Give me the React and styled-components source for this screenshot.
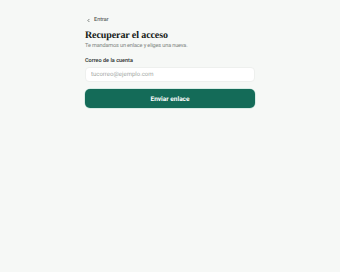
import React, { useState } from 'react';
import styled, { createGlobalStyle } from 'styled-components';

const Global = createGlobalStyle`
html, body {
  margin: 0;
  padding: 0;
  background: #f6f8f6;
}
body {
  font-family: Roboto, "Noto Sans", sans-serif;
  color: #1d2320;
  text-rendering: geometricPrecision;
}
`

const Page = styled.div`
min-height: 272px;
display: flex;
justify-content: center;
padding-top: 16px;
box-sizing: border-box;
`

const Column = styled.div`
width: 170px;
display: flex;
flex-direction: column;
`

const Back = styled.a`
display: flex;
align-items: center;
gap: 3px;
font-size: 5.5px;
color: #3a403d;
text-decoration: none;
height: 8px;
margin-left: 1px;
cursor: pointer;
`

const Title = styled.h1`
font-family: "Liberation Serif", "DejaVu Serif", serif;
font-weight: 700;
font-size: 10px;
letter-spacing: -0.1px;
margin: 6px 0 0;
line-height: 12px;
color: #151a17;
`

const Subtitle = styled.p`
font-size: 5.5px;
letter-spacing: -0.12px;
color: #7d8480;
margin: 1px 0 0;
line-height: 7px;
`

const Label = styled.label`
font-size: 5.5px;
font-weight: 500;
color: #2a302d;
margin-top: 8px;
line-height: 7px;
`

const Input = styled.input`
margin-top: 2px;
height: 15px;
box-sizing: border-box;
border: 1px solid #eef0ee;
border-radius: 4px;
background: #ffffff;
padding: 0 5px;
font-family: inherit;
font-size: 6px;
color: #222;
outline: none;
text-rendering: geometricPrecision;
&::placeholder {
  color: #a3a8a5;
}
`

const Button = styled.button`
margin-top: 7px;
height: 19px;
border: none;
border-radius: 5px;
background: #146b58;
color: #ffffff;
font-family: inherit;
font-weight: 700;
font-size: 6.5px;
text-rendering: geometricPrecision;
box-shadow: 0 0 0 0.5px #b9ddd3;
cursor: pointer;
`

export default function App(){
    const [ email, setEmail ] = useState('');

    return(
        <>
            <Global />
            <Page>
                <Column>
                    <Back>
                        <svg width="5" height="5" viewBox="0 0 24 24" fill="none" stroke="#3a403d" strokeWidth="3" strokeLinecap="round" strokeLinejoin="round">
                            <path d="M15 18l-6-6 6-6" />
                        </svg>
                        Entrar
                    </Back>
                    <Title>Recuperar el acceso</Title>
                    <Subtitle>Te mandamos un enlace y eliges una nueva.</Subtitle>
                    <Label htmlFor="email">Correo de la cuenta</Label>
                    <Input id="email" type="email" placeholder="tucorreo@ejemplo.com" value={email} onChange={e => setEmail(e.target.value)} />
                    <Button>Enviar enlace</Button>
                </Column>
            </Page>
        </>
    )
}
